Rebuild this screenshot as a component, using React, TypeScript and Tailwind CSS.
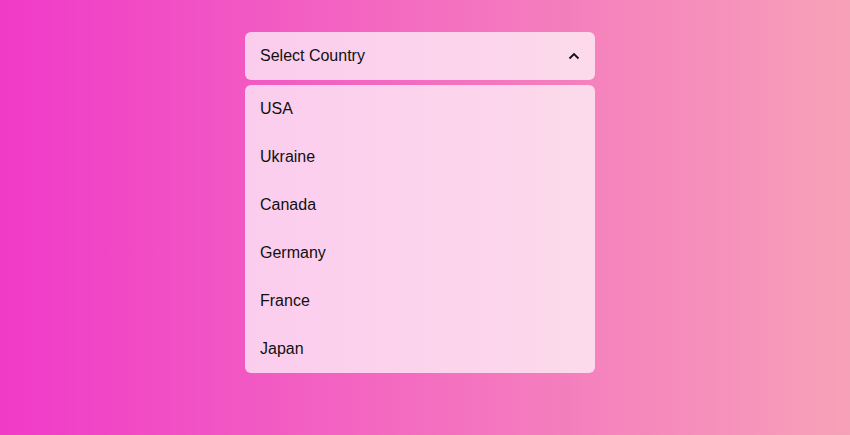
import React, { useState } from 'react'

const countries = ['USA', 'Ukraine', 'Canada', 'Germany', 'France', 'Japan']

const App = () => {
    const [open, setOpen] = useState(true)
    const [selected, setSelected] = useState<string | null>(null)

    return (
        <div className="min-h-[435px] w-full bg-[linear-gradient(90deg,#f03ac8,#f7a1b8)] font-['Liberation_Sans',Arial,sans-serif]">
            <div className="flex justify-center pt-8 pr-[10px]">
                <div className="w-[350px]">
                    <button
                        onClick={() => setOpen(!open)}
                        className="flex h-12 w-full items-center justify-between rounded-md bg-white/70 px-[15px] text-base text-[#111]"
                    >
                        <span>{selected ?? 'Select Country'}</span>
                        <svg width="12" height="8" viewBox="0 0 12 8" fill="none" className={open ? '' : 'rotate-180'}>
                            <path d="M1.5 6.5 6 2l4.5 4.5" stroke="#111" strokeWidth="1.8" />
                        </svg>
                    </button>

                    {open && (
                        <ul className="mt-[5px] rounded-md bg-white/70">
                            {countries.map((c) => (
                                <li
                                    key={c}
                                    onClick={() => { setSelected(c); setOpen(false) }}
                                    className="flex h-12 cursor-pointer items-center px-[15px] text-base text-[#111]"
                                >
                                    {c}
                                </li>
                            ))}
                        </ul>
                    )}
                </div>
            </div>
        </div>
    )
}

export default App
